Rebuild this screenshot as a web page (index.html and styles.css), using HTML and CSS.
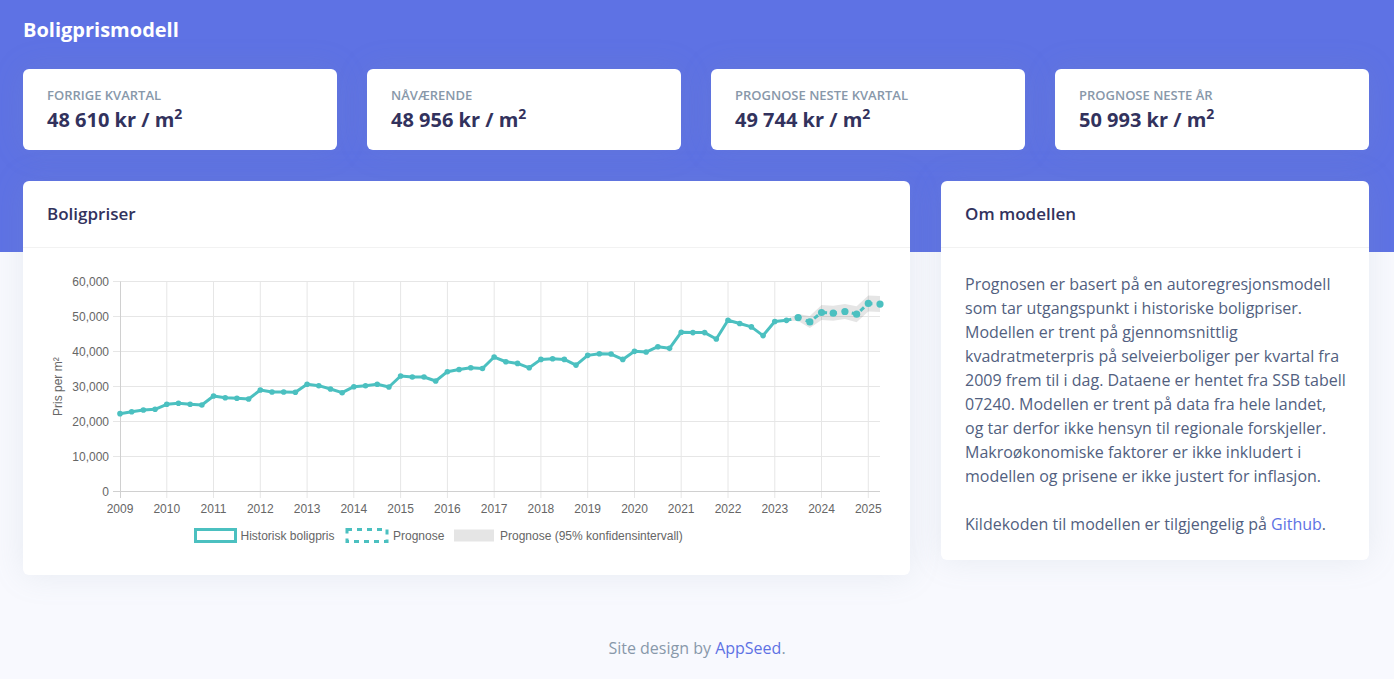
FILE: index.html
```html
<!DOCTYPE html>
<html lang="no">
<head>
<meta charset="utf-8">
<title>Boligprismodell</title>
<link rel="stylesheet" href="styles.css">
</head>
<body>
<header class="hero">
  <h1 class="brand">Boligprismodell</h1>
  <div class="stats">
    <div class="card stat">
      <div class="stat-label">Forrige kvartal</div>
      <div class="stat-value">48 610 kr / m<sup>2</sup></div>
    </div>
    <div class="card stat">
      <div class="stat-label">Nåværende</div>
      <div class="stat-value">48 956 kr / m<sup>2</sup></div>
    </div>
    <div class="card stat">
      <div class="stat-label">Prognose neste kvartal</div>
      <div class="stat-value">49 744 kr / m<sup>2</sup></div>
    </div>
    <div class="card stat">
      <div class="stat-label">Prognose neste år</div>
      <div class="stat-value">50 993 kr / m<sup>2</sup></div>
    </div>
  </div>
</header>

<main class="main">
  <section class="card">
    <div class="card-header"><h3>Boligpriser</h3></div>
    <div class="card-body">
      <svg class="chart" width="839" height="279" viewBox="0 0 839 279" xmlns="http://www.w3.org/2000/svg">
        <g class="grid" stroke="#e6e6e6" stroke-width="1">
          <line x1="66" y1="9.5" x2="833" y2="9.5"/>
          <line x1="66" y1="44.5" x2="833" y2="44.5"/>
          <line x1="66" y1="79.5" x2="833" y2="79.5"/>
          <line x1="66" y1="114.5" x2="833" y2="114.5"/>
          <line x1="66" y1="149.5" x2="833" y2="149.5"/>
          <line x1="66" y1="184.5" x2="833" y2="184.5"/>
          <line x1="119.8" y1="9.5" x2="119.8" y2="226"/>
          <line x1="166.5" y1="9.5" x2="166.5" y2="226"/>
          <line x1="213.3" y1="9.5" x2="213.3" y2="226"/>
          <line x1="260.1" y1="9.5" x2="260.1" y2="226"/>
          <line x1="306.8" y1="9.5" x2="306.8" y2="226"/>
          <line x1="353.6" y1="9.5" x2="353.6" y2="226"/>
          <line x1="400.4" y1="9.5" x2="400.4" y2="226"/>
          <line x1="447.2" y1="9.5" x2="447.2" y2="226"/>
          <line x1="493.9" y1="9.5" x2="493.9" y2="226"/>
          <line x1="540.7" y1="9.5" x2="540.7" y2="226"/>
          <line x1="587.5" y1="9.5" x2="587.5" y2="226"/>
          <line x1="634.2" y1="9.5" x2="634.2" y2="226"/>
          <line x1="681" y1="9.5" x2="681" y2="226"/>
          <line x1="727.8" y1="9.5" x2="727.8" y2="226"/>
          <line x1="774.5" y1="9.5" x2="774.5" y2="226"/>
          <line x1="821.3" y1="9.5" x2="821.3" y2="226"/>
        </g>
        <g stroke="#d0d0d0" stroke-width="1">
          <line x1="73.5" y1="9.5" x2="73.5" y2="226"/>
          <line x1="66" y1="219.5" x2="833" y2="219.5"/>
        </g>
        <g class="ticks" font-family="'Liberation Sans', Arial, sans-serif" font-size="12" fill="#666" text-anchor="end">
          <text x="62" y="13.7">60,000</text>
          <text x="62" y="48.7">50,000</text>
          <text x="62" y="83.7">40,000</text>
          <text x="62" y="118.7">30,000</text>
          <text x="62" y="153.7">20,000</text>
          <text x="62" y="188.7">10,000</text>
          <text x="62" y="223.7">0</text>
        </g>
        <g font-family="'Liberation Sans', Arial, sans-serif" font-size="12" fill="#666" text-anchor="middle">
          <text x="73" y="241">2009</text>
          <text x="119.8" y="241">2010</text>
          <text x="166.5" y="241">2011</text>
          <text x="213.3" y="241">2012</text>
          <text x="260.1" y="241">2013</text>
          <text x="306.8" y="241">2014</text>
          <text x="353.6" y="241">2015</text>
          <text x="400.4" y="241">2016</text>
          <text x="447.2" y="241">2017</text>
          <text x="493.9" y="241">2018</text>
          <text x="540.7" y="241">2019</text>
          <text x="587.5" y="241">2020</text>
          <text x="634.2" y="241">2021</text>
          <text x="681" y="241">2022</text>
          <text x="727.8" y="241">2023</text>
          <text x="774.5" y="241">2024</text>
          <text x="821.3" y="241">2025</text>
          <text transform="translate(15 114.7) rotate(-90)">Pris per m²</text>
        </g>

        <polygon fill="rgba(0,0,0,0.1)" points="739.46,47.85 751.15,42.1 762.85,43.88 774.54,33 786.23,33.72 797.92,31.98 809.62,34.18 821.31,23.47 833,24.1 833,40.1 821.31,39.47 809.62,50.18 797.92,46.98 786.23,48.72 774.54,48 762.85,55.88 751.15,49.1 739.46,48.85"/>

        <polyline fill="none" stroke="#4bc0c0" stroke-width="3" stroke-linejoin="round" points="73,141.65 84.69,139.69 96.38,138.01 108.08,137.31 119.77,132.3 131.46,131.29 143.15,132.3 154.85,133 166.54,124.01 178.23,125.69 189.92,126.28 201.62,126.98 213.31,117.99 225,119.98 236.69,119.98 248.38,120.3 260.08,112.28 271.77,113.68 283.46,117.01 295.15,120.68 306.85,114.7 318.54,113.68 330.23,112.28 341.92,115.01 353.62,103.99 365.31,105 377,105 388.69,108.99 400.38,99.68 412.08,97.55 423.77,95.73 435.46,96.5 447.15,85.05 458.85,89.74 470.54,91.42 482.23,95.8 493.92,87.4 505.62,86.73 517.31,87.4 529,93.1 540.69,83.37 552.38,81.73 564.08,82.04 575.77,87.4 587.46,79.35 599.15,80.05 610.85,74.69 622.54,76.34 634.23,60.24 645.92,60.62 657.62,60.62 669.31,66.96 681,48.2 692.69,51.56 704.38,54.88 716.08,63.6 727.77,49.56 739.46,48.35"/>
        <polyline fill="none" stroke="#4bc0c0" stroke-width="3" stroke-dasharray="5 5" points="739.46,48.35 751.15,45.6 762.85,49.88 774.54,40.5 786.23,41.22 797.92,39.48 809.62,42.18 821.31,31.47 833,32.1"/>

        <g fill="#4bc0c0">
          <circle cx="73" cy="141.65" r="2.8"/><circle cx="84.69" cy="139.69" r="2.8"/><circle cx="96.38" cy="138.01" r="2.8"/><circle cx="108.08" cy="137.31" r="2.8"/>
          <circle cx="119.77" cy="132.3" r="2.8"/><circle cx="131.46" cy="131.29" r="2.8"/><circle cx="143.15" cy="132.3" r="2.8"/><circle cx="154.85" cy="133" r="2.8"/>
          <circle cx="166.54" cy="124.01" r="2.8"/><circle cx="178.23" cy="125.69" r="2.8"/><circle cx="189.92" cy="126.28" r="2.8"/><circle cx="201.62" cy="126.98" r="2.8"/>
          <circle cx="213.31" cy="117.99" r="2.8"/><circle cx="225" cy="119.98" r="2.8"/><circle cx="236.69" cy="119.98" r="2.8"/><circle cx="248.38" cy="120.3" r="2.8"/>
          <circle cx="260.08" cy="112.28" r="2.8"/><circle cx="271.77" cy="113.68" r="2.8"/><circle cx="283.46" cy="117.01" r="2.8"/><circle cx="295.15" cy="120.68" r="2.8"/>
          <circle cx="306.85" cy="114.7" r="2.8"/><circle cx="318.54" cy="113.68" r="2.8"/><circle cx="330.23" cy="112.28" r="2.8"/><circle cx="341.92" cy="115.01" r="2.8"/>
          <circle cx="353.62" cy="103.99" r="2.8"/><circle cx="365.31" cy="105" r="2.8"/><circle cx="377" cy="105" r="2.8"/><circle cx="388.69" cy="108.99" r="2.8"/>
          <circle cx="400.38" cy="99.68" r="2.8"/><circle cx="412.08" cy="97.55" r="2.8"/><circle cx="423.77" cy="95.73" r="2.8"/><circle cx="435.46" cy="96.5" r="2.8"/>
          <circle cx="447.15" cy="85.05" r="2.8"/><circle cx="458.85" cy="89.74" r="2.8"/><circle cx="470.54" cy="91.42" r="2.8"/><circle cx="482.23" cy="95.8" r="2.8"/>
          <circle cx="493.92" cy="87.4" r="2.8"/><circle cx="505.62" cy="86.73" r="2.8"/><circle cx="517.31" cy="87.4" r="2.8"/><circle cx="529" cy="93.1" r="2.8"/>
          <circle cx="540.69" cy="83.37" r="2.8"/><circle cx="552.38" cy="81.73" r="2.8"/><circle cx="564.08" cy="82.04" r="2.8"/><circle cx="575.77" cy="87.4" r="2.8"/>
          <circle cx="587.46" cy="79.35" r="2.8"/><circle cx="599.15" cy="80.05" r="2.8"/><circle cx="610.85" cy="74.69" r="2.8"/><circle cx="622.54" cy="76.34" r="2.8"/>
          <circle cx="634.23" cy="60.24" r="2.8"/><circle cx="645.92" cy="60.62" r="2.8"/><circle cx="657.62" cy="60.62" r="2.8"/><circle cx="669.31" cy="66.96" r="2.8"/>
          <circle cx="681" cy="48.2" r="2.8"/><circle cx="692.69" cy="51.56" r="2.8"/><circle cx="704.38" cy="54.88" r="2.8"/><circle cx="716.08" cy="63.6" r="2.8"/>
          <circle cx="727.77" cy="49.56" r="2.8"/><circle cx="739.46" cy="48.35" r="2.8"/>
        </g>
        <g fill="#4bc0c0">
          <circle cx="751.15" cy="45.6" r="3.6"/><circle cx="762.85" cy="49.88" r="3.6"/><circle cx="774.54" cy="40.5" r="3.6"/><circle cx="786.23" cy="41.22" r="3.6"/>
          <circle cx="797.92" cy="39.48" r="3.6"/><circle cx="809.62" cy="42.18" r="3.6"/><circle cx="821.31" cy="31.47" r="3.6"/><circle cx="833" cy="32.1" r="3.6"/>
        </g>

        <g class="legend" font-family="'Liberation Sans', Arial, sans-serif" font-size="12" fill="#666">
          <rect x="148.5" y="257.5" width="40" height="12" fill="none" stroke="#4bc0c0" stroke-width="3"/>
          <text x="193.5" y="267.8">Historisk boligpris</text>
          <rect x="300" y="257.5" width="40" height="12" fill="none" stroke="#4bc0c0" stroke-width="3" stroke-dasharray="5 5"/>
          <text x="346" y="267.8">Prognose</text>
          <rect x="407" y="257.5" width="40" height="12" fill="rgba(0,0,0,0.1)"/>
          <text x="453" y="267.8">Prognose (95% konfidensintervall)</text>
        </g>
      </svg>
    </div>
  </section>

  <section class="card">
    <div class="card-header"><h3>Om modellen</h3></div>
    <div class="card-body about">
      <p>Prognosen er basert på en autoregresjonsmodell som tar utgangspunkt i historiske boligpriser. Modellen er trent på gjennomsnittlig kvadratmeterpris på selveierboliger per kvartal fra 2009 frem til i dag. Dataene er hentet fra SSB tabell 07240. Modellen er trent på data fra hele landet, og tar derfor ikke hensyn til regionale forskjeller. Makroøkonomiske faktorer er ikke inkludert i modellen og prisene er ikke justert for inflasjon.</p>
      <p>Kildekoden til modellen er tilgjengelig på <a href="#">Github</a>.</p>
    </div>
  </section>
</main>

<footer class="footer">Site design by <a href="#">AppSeed</a>.</footer>
</body>
</html>
```

FILE: styles.css
```css
* { box-sizing: border-box; }

body {
  margin: 0;
  background: #f8f9fe;
  font-family: "Open Sans", "Noto Sans", sans-serif;
  font-size: 16px;
  line-height: 1.5;
  color: #525f7f;
}

a { color: #5e72e4; text-decoration: none; }

.hero {
  background: #5e72e4;
  padding: 18px 25px 102px 23px;
}

.brand {
  margin: 0;
  color: #fff;
  font-size: 20px;
  font-weight: 700;
  line-height: 24px;
}

.stats {
  margin-top: 27px;
  display: grid;
  grid-template-columns: repeat(4, minmax(0, 1fr));
  gap: 30px;
}

.card {
  background: #fff;
  border-radius: 6px;
  box-shadow: 0 0 32px 0 rgba(136, 152, 170, 0.15);
}

.stat {
  padding: 17px 24px 15px;
  height: 81px;
}

.stat-label {
  font-size: 13px;
  font-weight: 600;
  text-transform: uppercase;
  color: #8898aa;
  line-height: 19px;
}

.stat-value {
  font-size: 20px;
  font-weight: 700;
  color: #32325d;
  line-height: 30px;
}

.stat-value sup {
  font-size: 14px;
  line-height: 0;
  vertical-align: 8px;
}

.main {
  margin-top: -71px;
  padding: 0 25px 0 23px;
  display: grid;
  grid-template-columns: minmax(0, 1fr) 428px;
  gap: 31px;
  align-items: start;
}

.card-header {
  padding: 20px 24px;
  border-bottom: 1px solid rgba(0, 0, 0, 0.05);
}

.card-header h3 {
  margin: 0;
  font-size: 17px;
  font-weight: 600;
  line-height: 25.5px;
  color: #32325d;
}

.card-body {
  padding: 24px;
}

.chart { display: block; }

.about {
  padding-right: 22px;
}

.about p {
  margin: 0 0 24px;
}

.about p:last-child { margin-bottom: 0; }

.footer {
  padding: 61px 0 20px;
  text-align: center;
  color: #8898aa;
}
```
